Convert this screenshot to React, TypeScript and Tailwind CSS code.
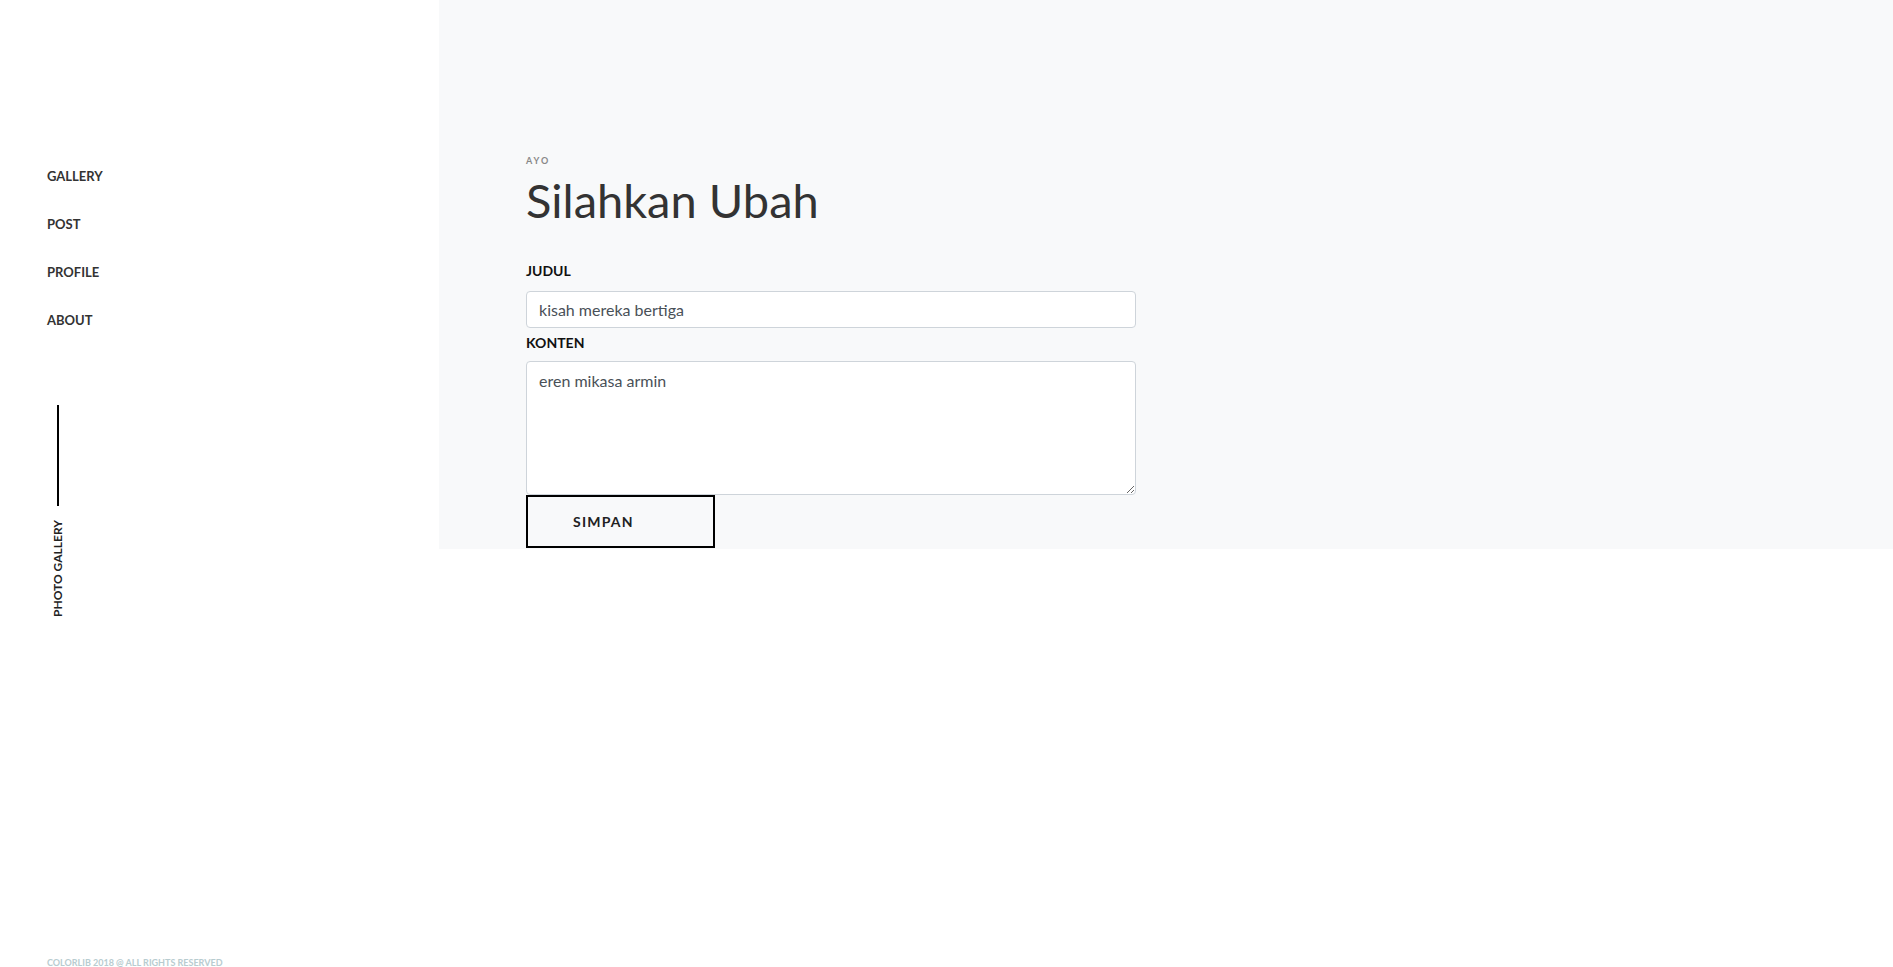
export default function App() {
  const navItems = ['GALLERY', 'POST', 'PROFILE', 'ABOUT']

  return (
    <div className="flex min-h-[967px] bg-white font-['Lato',sans-serif] text-[#333]">
      <aside className="w-[439px] shrink-0 flex flex-col pl-[47px]">
        <nav className="pt-[168px] flex flex-col gap-[31px]">
          {navItems.map((item) => (
            <a key={item} href="#" className="text-[13px] leading-[17px] font-bold text-[#333]">
              {item}
            </a>
          ))}
        </nav>

        <div className="mt-[76px] flex flex-col items-start">
          <div className="ml-[10px] w-[2px] h-[101px] bg-black" />
          <span className="mt-[14px] ml-[5px] [writing-mode:vertical-rl] rotate-180 text-[12px] leading-[12px] font-bold text-[#222]">
            PHOTO GALLERY
          </span>
        </div>

        <footer className="mt-auto pb-0 text-[9px] leading-[9px] font-bold text-[#b8ccd0]">
          COLORLIB 2018 @ ALL RIGHTS RESERVED
        </footer>
      </aside>

      <main className="flex-1 self-start h-[549px] bg-[#f8f9fa] pl-[87px] pt-[155px]">
        <div className="w-[610px]">
          <p className="text-[9px] leading-[12px] font-bold tracking-[2px] text-[#888]">AYO</p>
          <h1 className="mt-[5px] text-[47px] leading-[56px] font-normal text-[#333]">Silahkan Ubah</h1>

          <form className="mt-[34px] flex flex-col">
            <label className="text-[14px] leading-[17px] font-bold text-[#111]">JUDUL</label>
            <input
              defaultValue="kisah mereka bertiga"
              className="mt-[12px] h-[37px] w-full rounded-[4px] border border-[#ced4da] bg-white px-[12px] text-[16px] text-[#495057] outline-none"
            />
            <label className="mt-[6px] text-[14px] leading-[17px] font-bold text-[#111]">KONTEN</label>
            <textarea
              defaultValue="eren mikasa armin"
              className="mt-[10px] h-[134px] w-full rounded-[4px] border border-[#ced4da] bg-white px-[12px] py-[7px] text-[16px] leading-[24px] text-[#495057] outline-none"
            />
            <button
              type="button"
              className="w-[189px] h-[53px] border-2 border-black pl-[45px] text-left text-[14px] font-bold tracking-[1.2px] text-[#222]"
            >
              SIMPAN
            </button>
          </form>
        </div>
      </main>
    </div>
  )
}
